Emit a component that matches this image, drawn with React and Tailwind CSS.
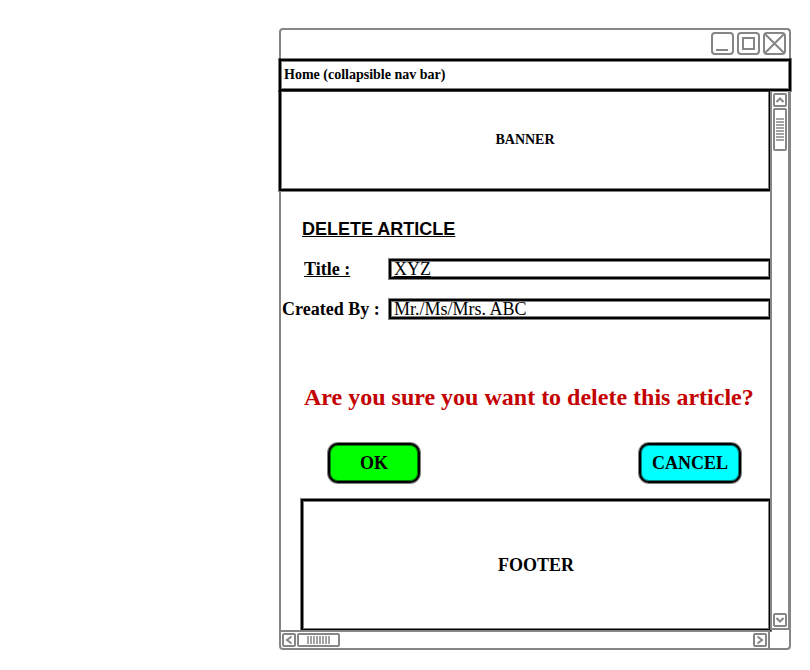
import { useState } from 'react';

const BOX =
  'border-black shadow-[0_0_0_1px_rgba(0,0,0,0.5),inset_0_0_0_1px_rgba(0,0,0,0.5)]';

const GRIP = [0, 3, 6, 9, 12, 15, 18, 21];

const CHEVRONS = {
  up: '1.5,7 5,3.5 8.5,7',
  down: '1.5,3 5,6.5 8.5,3',
  left: '7.5,1.5 3,5 7.5,8.5',
  right: '2.5,1.5 7,5 2.5,8.5',
};

function WindowButton({ label, children }) {
  return (
    <button
      type="button"
      aria-label={label}
      className="size-[23px] rounded border-2 border-[#868686] bg-white"
    >
      <svg viewBox="0 0 19 19" className="block size-[19px]" fill="none" stroke="#868686" strokeWidth="2">
        {children}
      </svg>
    </button>
  );
}

function ScrollArrow({ direction }) {
  return (
    <button
      type="button"
      aria-label={`Scroll ${direction}`}
      className="size-[14px] shrink-0 rounded-xs border-2 border-[#868686] bg-white"
    >
      <svg viewBox="0 0 10 10" className="block size-[10px]" fill="none" stroke="#868686" strokeWidth="2">
        <polyline points={CHEVRONS[direction]} />
      </svg>
    </button>
  );
}

function Field({ id, label, labelClass, inputClass, value }) {
  const [text, setText] = useState(value);
  return (
    <div className="-mr-px flex items-center">
      <label htmlFor={id} className={`w-[108px] shrink-0 text-lg leading-5 font-bold ${labelClass}`}>
        <span>{label}</span>
      </label>
      <input
        id={id}
        value={text}
        onChange={(e) => setText(e.target.value)}
        className={`h-5 min-w-0 flex-1 border-2 bg-white px-[3px] py-0 text-lg leading-4 outline-none ${BOX} ${inputClass}`}
      />
    </div>
  );
}

export default function App() {
  return (
    <div className="bg-white pt-7 pr-[19px] pb-5 pl-[279px] font-['Liberation_Serif',serif] text-black">
      <div className="flex flex-col">
        <div className="flex h-[31px] items-start justify-end gap-[3px] rounded-t border-2 border-b-0 border-[#868686] pt-[2px] pr-[3px]">
          <WindowButton label="Minimise">
            <path d="M3 16H15" />
          </WindowButton>
          <WindowButton label="Maximise">
            <rect x="4" y="4" width="11" height="11" />
          </WindowButton>
          <WindowButton label="Close">
            <path d="M0 0L19 19M19 0L0 19" />
          </WindowButton>
        </div>

        <nav className={`flex h-8 items-center border-2 bg-white pl-[3px] ${BOX}`}>
          <a href="#home" className="text-sm leading-5 font-bold">
            Home (collapsible nav bar)
          </a>
        </nav>

        <div className="flex">
          <div className="flex min-w-0 flex-1 flex-col">
            <header
              className={`-mr-px flex h-[100px] items-center justify-center border-2 border-t-0 text-sm font-bold ${BOX}`}
            >
              BANNER
            </header>

            <main className="flex flex-col border-l-2 border-[#868686]">
              <h1 className="mt-7 pl-[21px] font-['Liberation_Sans',sans-serif] text-lg leading-5 font-bold underline">
                DELETE ARTICLE
              </h1>

              <form className="mt-5 flex flex-col gap-5" onSubmit={(e) => e.preventDefault()}>
                <Field id="title" label="Title :" labelClass="pl-[23px] underline" inputClass="underline" value="XYZ" />
                <Field id="author" label="Created By :" labelClass="pl-px" inputClass="" value="Mr./Ms/Mrs. ABC" />
              </form>

              <p className="mt-16 pl-[23px] text-2xl leading-7 font-bold text-[#c40000]">
                Are you sure you want to delete this article?
              </p>

              <div className="mt-8 flex justify-between pr-[29px] pl-[47px]">
                <button
                  type="button"
                  className={`h-10 w-[92px] rounded-[10px] border-2 bg-[#00ff00] text-lg leading-5 font-bold ${BOX}`}
                >
                  OK
                </button>
                <button
                  type="button"
                  className={`h-10 w-[102px] rounded-[10px] border-2 bg-[#00ffff] text-lg leading-5 font-bold ${BOX}`}
                >
                  CANCEL
                </button>
              </div>

              <footer
                className={`mt-4 -mr-px -mb-px ml-5 flex h-[132px] items-center justify-center border-2 text-lg font-bold ${BOX}`}
              >
                FOOTER
              </footer>
            </main>
          </div>

          <div className="flex w-[21px] shrink-0 flex-col border-2 border-t border-r-3 border-[#868686] bg-white p-px">
            <ScrollArrow direction="up" />
            <div className="mt-px h-[43px] w-[14px] rounded-xs border-2 border-[#868686]">
              <svg viewBox="0 0 10 39" className="block h-[39px] w-[10px]" stroke="#868686" strokeWidth="1.5">
                {GRIP.map((y) => (
                  <path key={y} d={`M1 ${y + 9}H9`} />
                ))}
              </svg>
            </div>
            <div className="flex-1" />
            <ScrollArrow direction="down" />
          </div>
        </div>

        <div className="flex h-5">
          <div className="flex min-w-0 flex-1 rounded-bl border-2 border-[#868686] bg-white p-px">
            <ScrollArrow direction="left" />
            <div className="ml-px h-[14px] w-[43px] rounded-xs border-2 border-[#868686]">
              <svg viewBox="0 0 39 10" className="block h-[10px] w-[39px]" stroke="#868686" strokeWidth="1.5">
                {GRIP.map((x) => (
                  <path key={x} d={`M${x + 9} 1V9`} />
                ))}
              </svg>
            </div>
            <div className="flex-1" />
            <ScrollArrow direction="right" />
          </div>
          <div className="w-[21px] shrink-0 rounded-br border-r-2 border-b-2 border-[#868686]" />
        </div>
      </div>
    </div>
  );
}
